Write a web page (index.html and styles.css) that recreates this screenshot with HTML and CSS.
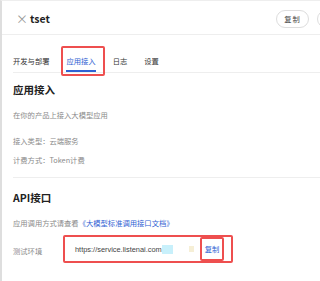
FILE: index.html
```html
<!DOCTYPE html>
<html lang="zh">
<head>
    <meta charset="UTF-8">
    <meta name="viewport" content="width=device-width, initial-scale=1.0">
    <title>tset</title>
    <link rel="stylesheet" href="styles.css">
</head>
<body>
    <div class="drawer">
        <div class="header">
            <span class="close">×</span>
            <span class="title">tset</span>
            <div class="actions">
                <button class="pill">复制</button>
                <button class="pill more"></button>
            </div>
        </div>

        <div class="tabs">
            <div class="tab">开发与部署</div>
            <div class="tab active">应用接入</div>
            <div class="tab">日志</div>
            <div class="tab">设置</div>
        </div>

        <div class="content">
            <h2 class="section-title">应用接入</h2>
            <p class="desc">在你的产品上接入大模型应用</p>
            <p class="meta first">接入类型：云端服务</p>
            <p class="meta">计费方式：Token计费</p>

            <div class="divider"></div>

            <h2 class="section-title api">API接口</h2>
            <p class="desc doc">应用调用方式请查看<a href="#">《大模型标准调用接口文档》</a></p>

            <div class="env-row">
                <span class="env-label">测试环境</span>
                <div class="env-value">
                    <span class="url">https://service.listenai.com</span>
                    <span class="blur"></span>
                    <span class="dot"></span>
                    <a href="#" class="copy">复制</a>
                </div>
            </div>
        </div>
    </div>
</body>
</html>
```

FILE: styles.css
```css
* { margin: 0; padding: 0; box-sizing: border-box; }
body {
    font-family: "Noto Sans CJK SC", "Noto Sans", sans-serif;
    background: #ffffff;
    color: #1f1f1f;
    width: 320px;
    height: 281px;
    overflow: hidden;
}
.drawer {
    height: 281px;
    border-left: 2px solid #dedede;
    border-top: 1px solid #eeeeee;
}
.header {
    height: 34px;
    padding: 2px 0 0 14px;
    display: flex;
    align-items: center;
    border-bottom: 1px solid #eeeeee;
}
.close {
    font-size: 12px;
    color: #999999;
    line-height: 12px;
    width: 14px;
}
.title {
    font-size: 10.5px;
    font-weight: 700;
    line-height: 14px;
    color: #1f1f1f;
}
.actions {
    margin-left: auto;
    margin-right: -30px;
    display: flex;
    gap: 8px;
}
.pill {
    width: 33px;
    height: 18px;
    border: 1px solid #dddddd;
    border-radius: 9px;
    background: #ffffff;
    font-family: inherit;
    font-size: 7.3px;
    color: #444444;
    letter-spacing: 1px;
}
.tabs {
    margin: 12px 0 0 11px;
    display: flex;
    gap: 17px;
    border-bottom: 1px solid #eeeeee;
}
.tab {
    position: relative;
    padding: 8px 0 3px;
    font-size: 7.3px;
    line-height: 12px;
    color: #333333;
    border-bottom: 2px solid transparent;
}
.tab.active {
    color: #2f62d3;
    border-bottom-color: #2f62d3;
}
.tab.active::after {
    content: "";
    position: absolute;
    top: -1px;
    left: -5px;
    right: -9px;
    bottom: -6px;
    border: 2px solid #ee4f4f;
    border-radius: 2px;
}
.content {
    padding-left: 11px;
}
.section-title {
    margin-top: 9px;
    font-size: 10.5px;
    font-weight: 700;
    line-height: 16px;
    color: #222222;
}
.section-title.api {
    margin-top: 12px;
}
.desc, .meta {
    font-size: 7.3px;
    line-height: 12px;
    color: #8a8a8a;
}
.desc {
    margin-top: 11px;
}
.meta {
    margin-top: 7px;
}
.meta.first {
    margin-top: 14px;
}
.divider {
    margin-top: 11px;
    height: 1px;
    background: #eeeeee;
}
.doc a {
    color: #2f62d3;
    text-decoration: none;
}
.env-row {
    margin-top: 6px;
    display: flex;
    align-items: center;
}
.env-label {
    width: 50px;
    font-size: 7.3px;
    color: #8a8a8a;
    padding-top: 3px;
}
.env-value {
    width: 170px;
    height: 28px;
    border: 2px solid #ee4f4f;
    border-radius: 2px;
    padding-left: 10px;
    display: flex;
    align-items: center;
}
.url {
    font-family: "Liberation Sans", sans-serif;
    font-size: 7.4px;
    color: #444444;
}
.blur {
    width: 11px;
    height: 9px;
    background: #c8f0fb;
}
.dot {
    margin-left: 16px;
    width: 5px;
    height: 6px;
    background: #f6efd6;
}
.copy {
    margin-left: 6px;
    height: 24px;
    padding: 0 3px;
    border: 2px solid #ee4f4f;
    border-radius: 2px;
    display: flex;
    align-items: center;
    font-size: 7.3px;
    color: #2f62d3;
    text-decoration: none;
}
```
